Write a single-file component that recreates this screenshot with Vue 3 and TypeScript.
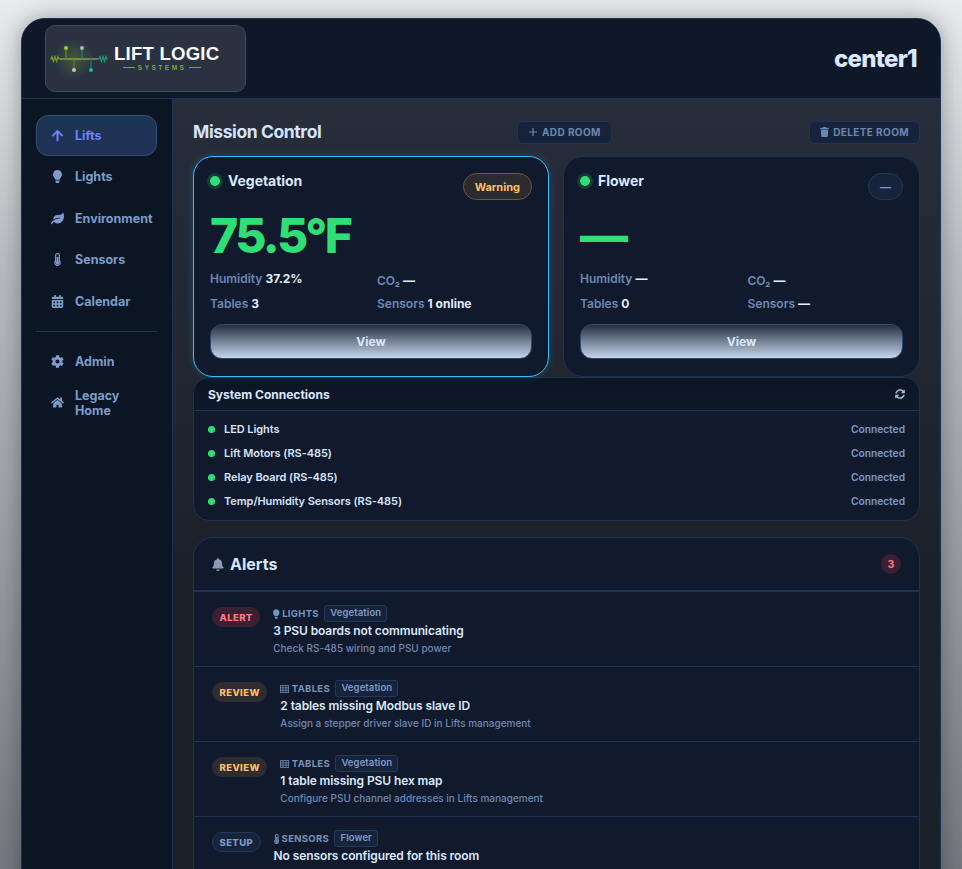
<script setup lang="ts">
interface NavItem {
  label: string
  icon: string
  box: string
  active?: boolean
}

interface Room {
  name: string
  temp: string
  statusLabel: string
  statusClass: string
  selected: boolean
  humidity: string
  co2: string
  tables: string
  sensors: string
}

interface Alert {
  level: string
  levelClass: string
  icon: string
  box: string
  iconWidth: number
  category: string
  room: string
  title: string
  detail?: string
}

const ICONS: Record<string, { box: string; d: string }> = {
  bulb: { box: '0 0 352 512', d: 'M96.06 454.35c.01 6.29 1.87 12.45 5.36 17.69l17.09 25.69a31.99 31.99 0 0 0 26.64 14.28h61.71a31.99 31.99 0 0 0 26.64-14.28l17.09-25.69a31.989 31.989 0 0 0 5.36-17.69l.04-38.35H96.01l.05 38.35zM0 176c0 44.37 16.45 84.85 43.56 115.78 16.52 18.85 42.36 58.23 52.21 91.45.04.26.07.52.11.78h160.24c.04-.26.07-.51.11-.78 9.85-33.22 35.69-72.6 52.21-91.45C335.55 260.85 352 220.37 352 176 352 78.61 272.91-.3 175.45 0 73.44.31 0 82.97 0 176z' },
  leaf: { box: '0 0 576 512', d: 'M546.2 9.7c-5.6-12.5-21.6-13-28.3-1.2C486.9 62.4 431.4 96 368 96h-80C182 96 96 182 96 288c0 7 .8 13.7 1.5 20.5C161.3 262.8 253.4 224 384 224c8.8 0 16 7.2 16 16s-7.2 16-16 16C132.6 256 26 410.1 2.4 468c-6.6 16.3 1.2 34.9 17.5 41.6 16.4 6.8 35-1.1 41.8-17.3 1.5-3.6 20.9-47.9 71.9-90.6 32.4 43.9 94 85.8 174.9 77.2C465.5 467.5 576 326.7 576 154.3c0-50.2-10.8-102.2-29.8-144.6z' },
  calendar: { box: '0 0 448 512', d: 'M0 464c0 26.5 21.5 48 48 48h352c26.5 0 48-21.5 48-48V192H0v272zm320-196c0-6.6 5.4-12 12-12h40c6.6 0 12 5.4 12 12v40c0 6.6-5.4 12-12 12h-40c-6.6 0-12-5.4-12-12v-40zm0 128c0-6.6 5.4-12 12-12h40c6.6 0 12 5.4 12 12v40c0 6.6-5.4 12-12 12h-40c-6.6 0-12-5.4-12-12v-40zM192 268c0-6.6 5.4-12 12-12h40c6.6 0 12 5.4 12 12v40c0 6.6-5.4 12-12 12h-40c-6.6 0-12-5.4-12-12v-40zm0 128c0-6.6 5.4-12 12-12h40c6.6 0 12 5.4 12 12v40c0 6.6-5.4 12-12 12h-40c-6.6 0-12-5.4-12-12v-40zM64 268c0-6.6 5.4-12 12-12h40c6.6 0 12 5.4 12 12v40c0 6.6-5.4 12-12 12H76c-6.6 0-12-5.4-12-12v-40zm0 128c0-6.6 5.4-12 12-12h40c6.6 0 12 5.4 12 12v40c0 6.6-5.4 12-12 12H76c-6.6 0-12-5.4-12-12v-40zM400 64h-48V16c0-8.8-7.2-16-16-16h-32c-8.8 0-16 7.2-16 16v48H160V16c0-8.8-7.2-16-16-16h-32c-8.8 0-16 7.2-16 16v48H48C21.5 64 0 85.5 0 112v48h448v-48c0-26.5-21.5-48-48-48z' },
  cog: { box: '0 0 512 512', d: 'M487.4 315.7l-42.6-24.6c4.3-23.2 4.3-47 0-70.2l42.6-24.6c4.9-2.8 7.1-8.6 5.5-14-11.1-35.6-30-67.8-54.7-94.6-3.8-4.1-10-5.1-14.8-2.3L380.8 110c-17.9-15.4-38.5-27.3-60.8-35.1V25.8c0-5.6-3.9-10.5-9.4-11.7-36.7-8.2-74.3-7.8-109.2 0-5.5 1.2-9.4 6.1-9.4 11.7V75c-22.2 7.9-42.8 19.8-60.8 35.1L88.7 85.5c-4.9-2.8-11-1.9-14.8 2.3-24.7 26.7-43.6 58.9-54.7 94.6-1.7 5.4.6 11.2 5.5 14L67.3 221c-4.3 23.2-4.3 47 0 70.2l-42.6 24.6c-4.9 2.8-7.1 8.6-5.5 14 11.1 35.6 30 67.8 54.7 94.6 3.8 4.1 10 5.1 14.8 2.3l42.6-24.6c17.9 15.4 38.5 27.3 60.8 35.1v49.2c0 5.6 3.9 10.5 9.4 11.7 36.7 8.2 74.3 7.8 109.2 0 5.5-1.2 9.4-6.1 9.4-11.7v-49.2c22.2-7.9 42.8-19.8 60.8-35.1l42.6 24.6c4.9 2.8 11 1.9 14.8-2.3 24.7-26.7 43.6-58.9 54.7-94.6 1.5-5.5-.7-11.3-5.6-14.1zM256 336c-44.1 0-80-35.9-80-80s35.9-80 80-80 80 35.9 80 80-35.9 80-80 80z' },
  home: { box: '0 0 576 512', d: 'M280.37 148.26L96 300.11V464a16 16 0 0 0 16 16l112.06-.29a16 16 0 0 0 15.92-16V368a16 16 0 0 1 16-16h64a16 16 0 0 1 16 16v95.64a16 16 0 0 0 16 16.05L464 480a16 16 0 0 0 16-16V300L295.67 148.26a12.19 12.19 0 0 0-15.3 0zM571.6 251.47L488 182.56V44.05a12 12 0 0 0-12-12h-56a12 12 0 0 0-12 12v72.61L318.47 43a48 48 0 0 0-61 0L4.34 251.47a12 12 0 0 0-1.6 16.9l25.5 31A12 12 0 0 0 45.15 301l235.22-193.74a12.19 12.19 0 0 1 15.3 0L530.9 301a12 12 0 0 0 16.9-1.6l25.5-31a12 12 0 0 0-1.7-16.93z' },
  arrow: { box: '0 0 448 512', d: 'M34.9 289.5l-22.2-22.2c-9.4-9.4-9.4-24.6 0-33.9L207 39c9.4-9.4 24.6-9.4 33.9 0l194.3 194.3c9.4 9.4 9.4 24.6 0 33.9L413 289.4c-9.5 9.5-25 9.3-34.3-.4L264 168.6V456c0 13.3-10.7 24-24 24h-32c-13.3 0-24-10.7-24-24V168.6L69.2 289.1c-9.3 9.8-24.8 10-34.3.4z' },
  thermo: { box: '0 0 256 512', d: 'M192 384c0 35.3-28.7 64-64 64s-64-28.7-64-64c0-23.7 12.9-44.3 32-55.4V176c0-17.7 14.3-32 32-32s32 14.3 32 32v152.6c19.1 11.1 32 31.7 32 55.4zM224 288V96c0-53-43-96-96-96S32 43 32 96v192C12.3 312.7 0 344.9 0 384c0 70.7 57.3 128 128 128s128-57.3 128-128c0-39.1-12.3-71.3-32-96zm-96 176c-44.1 0-80-35.9-80-80 0-25.6 12.2-49 32-64V96c0-26.5 21.500-48 48-48s48 21.500 48 48v224c19.800 15 32 38.400 32 64 0 44.100-35.900 80-80 80z' },
  table: { box: '0 0 512 512', d: 'M0 48H512V464H0ZM40 88h110v85H40ZM190 88h132v85H190ZM362 88h110v85H362ZM40 213h110v85H40ZM190 213h132v85H190ZM362 213h110v85H362ZM40 338h110v86H40ZM190 338h132v86H190ZM362 338h110v86H362Z' }
}

const mainNav: NavItem[] = [
  { label: 'Lifts', icon: ICONS.arrow.d, box: ICONS.arrow.box, active: true },
  { label: 'Lights', icon: ICONS.bulb.d, box: ICONS.bulb.box },
  { label: 'Environment', icon: ICONS.leaf.d, box: ICONS.leaf.box },
  { label: 'Sensors', icon: ICONS.thermo.d, box: ICONS.thermo.box },
  { label: 'Calendar', icon: ICONS.calendar.d, box: ICONS.calendar.box }
]

const bottomNav: NavItem[] = [
  { label: 'Admin', icon: ICONS.cog.d, box: ICONS.cog.box },
  { label: 'Legacy Home', icon: ICONS.home.d, box: ICONS.home.box }
]

const rooms: Room[] = [
  { name: 'Vegetation', temp: '75.5°F', statusLabel: 'Warning', statusClass: 'warn', selected: true, humidity: '37.2%', co2: '—', tables: '3', sensors: '1 online' },
  { name: 'Flower', temp: '—', statusLabel: '—', statusClass: 'none', selected: false, humidity: '—', co2: '—', tables: '0', sensors: '—' }
]

const connections = ['LED Lights', 'Lift Motors (RS-485)', 'Relay Board (RS-485)', 'Temp/Humidity Sensors (RS-485)']

const alerts: Alert[] = [
  { level: 'ALERT', levelClass: 'alert', icon: ICONS.bulb.d, box: ICONS.bulb.box, iconWidth: 6.5, category: 'LIGHTS', room: 'Vegetation', title: '3 PSU boards not communicating', detail: 'Check RS-485 wiring and PSU power' },
  { level: 'REVIEW', levelClass: 'review', icon: ICONS.table.d, box: ICONS.table.box, iconWidth: 9, category: 'TABLES', room: 'Vegetation', title: '2 tables missing Modbus slave ID', detail: 'Assign a stepper driver slave ID in Lifts management' },
  { level: 'REVIEW', levelClass: 'review', icon: ICONS.table.d, box: ICONS.table.box, iconWidth: 9, category: 'TABLES', room: 'Vegetation', title: '1 table missing PSU hex map', detail: 'Configure PSU channel addresses in Lifts management' },
  { level: 'SETUP', levelClass: 'setup', icon: ICONS.thermo.d, box: ICONS.thermo.box, iconWidth: 5.5, category: 'SENSORS', room: 'Flower', title: 'No sensors configured for this room' }
]
</script>

<template>
  <div class="page">
    <div class="window">
      <header class="topbar">
        <div class="logo">
          <svg class="logo-art" viewBox="0 0 60 40" width="60" height="40">
            <defs>
              <radialGradient id="logoGlow">
                <stop offset="0" stop-color="#7fb02a" stop-opacity="0.3" />
                <stop offset="1" stop-color="#7fb02a" stop-opacity="0" />
              </radialGradient>
            </defs>
            <circle cx="25" cy="20" r="20" fill="url(#logoGlow)" />
            <path d="M11 20H49" stroke="#a9c65a" stroke-width="1" />
            <path d="M1 20h1l1-2.500 1.500 5 1.500-5 1.500 5 1.500-5 1 2.500h2" fill="none" stroke="#6fa51f" stroke-width="1.100" />
            <path d="M49 20h1l1-2.500 1.500 5 1.500-5 1.500 5 1.500-5 1 2.500h1" fill="none" stroke="#15a06c" stroke-width="1.100" />
            <path d="M17 9V20" stroke="#5d8a18" stroke-width="1.300" />
            <path d="M33 9V20" stroke="#15855c" stroke-width="1.300" />
            <path d="M25 20V31" stroke="#5d7a2a" stroke-width="1.300" />
            <path d="M42 20V31" stroke="#1a7a58" stroke-width="1.300" />
            <circle cx="17" cy="9" r="2" fill="#9ad21e" />
            <circle cx="33" cy="9" r="2" fill="#b5b5ad" />
            <circle cx="25" cy="31" r="2" fill="#c5c5bf" />
            <circle cx="42" cy="31" r="2" fill="#12c285" />
          </svg>
          <div class="logo-text">
            <div class="logo-name">LIFT LOGIC</div>
            <div class="logo-sub"><i></i><span>SYSTEMS</span><i></i></div>
          </div>
        </div>
        <div class="center-name">center1</div>
      </header>

      <div class="body">
        <aside class="sidebar">
          <nav class="nav">
            <a v-for="item in mainNav" :key="item.label" :class="['nav-item', { active: item.active }]">
              <svg class="nav-icon" :viewBox="item.box"><path :d="item.icon" fill="currentColor" fill-rule="evenodd" /></svg>
              <span>{{ item.label }}</span>
            </a>
          </nav>
          <div class="nav-divider"></div>
          <nav class="nav">
            <a v-for="item in bottomNav" :key="item.label" class="nav-item">
              <svg class="nav-icon" :viewBox="item.box"><path :d="item.icon" fill="currentColor" fill-rule="evenodd" /></svg>
              <span>{{ item.label }}</span>
            </a>
          </nav>
        </aside>

        <main class="main">
          <div class="title-row">
            <h1>Mission Control</h1>
            <button class="ghost-btn add">
              <svg viewBox="0 0 10 10" width="10" height="10"><path d="M5 1V9M1 5H9" stroke="currentColor" stroke-width="1.200" /></svg>
              ADD ROOM
            </button>
            <button class="ghost-btn">
              <svg viewBox="0 0 448 512" width="9" height="10"><path d="M432 32H312l-9.400-18.700A24 24 0 0 0 281.100 0H166.800a23.720 23.720 0 0 0-21.400 13.300L136 32H16A16 16 0 0 0 0 48v32a16 16 0 0 0 16 16h416a16 16 0 0 0 16-16V48a16 16 0 0 0-16-16zM53.200 467a48 48 0 0 0 47.900 45h245.800a48 48 0 0 0 47.900-45L416 128H32z" fill="currentColor" /></svg>
              DELETE ROOM
            </button>
          </div>

          <div class="rooms">
            <section v-for="room in rooms" :key="room.name" :class="['room', { selected: room.selected }]">
              <div class="room-head">
                <div class="room-name"><span class="room-dot"></span>{{ room.name }}</div>
                <span :class="['status', room.statusClass]">{{ room.statusLabel }}</span>
              </div>
              <div class="room-temp">{{ room.temp }}</div>
              <div class="stats">
                <div>Humidity <b>{{ room.humidity }}</b></div>
                <div class="low">CO₂ <b>{{ room.co2 }}</b></div>
                <div>Tables <b>{{ room.tables }}</b></div>
                <div>Sensors <b>{{ room.sensors }}</b></div>
              </div>
              <button class="view-btn">View</button>
            </section>
          </div>

          <section class="connections">
            <div class="conn-head">
              <span>System Connections</span>
              <svg viewBox="0 0 512 512" width="10" height="10"><path d="M370.720 133.280C339.458 104.008 298.888 87.962 255.848 88c-77.458.068-144.328 53.178-162.791 126.850-1.344 5.363-6.122 9.150-11.651 9.150H24.103c-7.498 0-13.194-6.807-11.807-14.176C33.933 94.924 134.813 8 256 8c66.448 0 126.791 26.136 171.315 68.685L463.030 40.970C478.149 25.851 504 36.559 504 57.941V192c0 13.255-10.745 24-24 24H345.941c-21.382 0-32.090-25.851-16.971-40.971l41.750-41.749zM32 296h134.059c21.382 0 32.090 25.851 16.971 40.971l-41.750 41.750c31.262 29.273 71.835 45.319 114.876 45.280 77.418-.07 144.315-53.144 162.787-126.849 1.344-5.363 6.122-9.150 11.651-9.150h57.304c7.498 0 13.194 6.807 11.807 14.176C478.067 417.076 377.187 504 256 504c-66.448 0-126.791-26.136-171.315-68.685L48.970 471.030C33.851 486.149 8 475.441 8 454.059V320c0-13.255 10.745-24 24-24z" fill="currentColor" /></svg>
            </div>
            <div class="conn-list">
              <div v-for="name in connections" :key="name" class="conn-row">
                <span class="conn-dot"></span>
                <span class="conn-name">{{ name }}</span>
                <span class="conn-state">Connected</span>
              </div>
            </div>
          </section>

          <section class="alerts">
            <div class="alerts-head">
              <svg viewBox="0 0 448 512" width="12" height="13"><path d="M224 512c35.320 0 63.970-28.650 63.970-64H160.030c0 35.350 28.650 64 63.970 64zm215.390-149.710c-19.320-20.760-55.470-51.990-55.470-154.290 0-77.700-54.480-139.900-127.940-155.160V32c0-17.670-14.320-32-31.980-32s-31.980 14.330-31.980 32v20.840C118.560 68.100 64.080 130.300 64.080 208c0 102.300-36.150 133.530-55.470 154.290-6 6.450-8.660 14.160-8.610 21.710.11 16.400 12.980 32 32.100 32h383.800c19.120 0 32-15.600 32.100-32 .05-7.550-2.610-15.270-8.610-21.710z" fill="currentColor" /></svg>
              <h2>Alerts</h2>
              <span class="count">3</span>
            </div>
            <div v-for="alert in alerts" :key="alert.title" class="alert-row">
              <span :class="['level', alert.levelClass]">{{ alert.level }}</span>
              <div class="alert-body">
                <div class="alert-meta">
                  <svg :viewBox="alert.box" height="10" :width="alert.iconWidth"><path :d="alert.icon" fill="currentColor" fill-rule="evenodd" /></svg>
                  <span class="alert-cat">{{ alert.category }}</span>
                  <span class="alert-room">{{ alert.room }}</span>
                </div>
                <div class="alert-title">{{ alert.title }}</div>
                <div v-if="alert.detail" class="alert-detail">{{ alert.detail }}</div>
              </div>
            </div>
          </section>
        </main>
      </div>
    </div>
  </div>
</template>

<style>
html,
body {
  margin: 0;
  height: 100%;
  overflow: hidden;
}
</style>

<style scoped>
.page {
  height: 869px;
  overflow: hidden;
  box-sizing: border-box;
  padding: 18px 21px 0;
  background: linear-gradient(180deg, #e9ecef 0%, #b9bcc0 30%, #75787e 100%);
  font-family: Inter, "Liberation Sans", sans-serif;
}

.window {
  box-sizing: border-box;
  min-height: 1000px;
  background: #0d1626;
  border: 1px solid #1e3352;
  border-radius: 24px 24px 0 0;
  overflow: hidden;
  box-shadow: 0 0 22px rgba(10, 16, 28, 0.35);
}

.topbar {
  display: flex;
  justify-content: space-between;
  align-items: center;
  height: 80px;
  box-sizing: border-box;
  padding: 0 23px;
  border-bottom: 1px solid #1e3352;
  background: #0e1829;
}

.logo {
  box-sizing: border-box;
  display: flex;
  align-items: center;
  width: 201px;
  height: 67px;
  padding-left: 3px;
  gap: 5px;
  background: #2a3242;
  border: 1px solid #424b5b;
  border-radius: 10px;
}

.logo-text {
  text-align: center;
  padding-bottom: 2px;
}

.logo-name {
  font-family: "Liberation Sans", Arial, sans-serif;
  font-weight: 700;
  font-size: 18.6px;
  line-height: 20px;
  color: #fff;
  letter-spacing: 0.2px;
}

.logo-sub {
  display: flex;
  align-items: center;
  justify-content: center;
  gap: 3px;
  margin-left: -9px;
  font-family: "Liberation Sans", Arial, sans-serif;
  font-size: 6.5px;
  font-weight: 700;
  letter-spacing: 2.5px;
  line-height: 8px;
  color: #76ab20;
}

.logo-sub i {
  width: 12px;
  height: 1px;
  background: #76ab20;
}

.center-name {
  font-size: 24px;
  font-weight: 800;
  letter-spacing: -0.7px;
  color: #dbe8ff;
}

.body {
  display: flex;
}

.sidebar {
  box-sizing: border-box;
  flex: 0 0 151px;
  width: 151px;
  min-width: 0;
  padding: 15.500px 15px 16px 14px;
  background: #0c1524;
  border-right: 1px solid #1e3352;
}

.nav {
  display: flex;
  flex-direction: column;
}

.nav-item {
  display: flex;
  align-items: center;
  box-sizing: border-box;
  min-height: 41.500px;
  padding: 0 4px 0 13.500px;
  gap: 11.500px;
  font-size: 12.500px;
  line-height: 15px;
  font-weight: 700;
  color: #7d9ccb;
  border: 1px solid transparent;
  border-radius: 12px;
}

.nav-item.active {
  color: #6c83ff;
  background: linear-gradient(180deg, #1b3651 0%, #222f58 100%);
  border-color: #2f4f78;
}

.nav-icon {
  flex: 0 0 13px;
  width: 13px;
  height: 13px;
}

.nav-divider {
  height: 1px;
  margin: 9px 0 8.500px;
  background: #22344f;
}

.main {
  flex: 1;
  min-width: 0;
  padding: 20px;
  background: linear-gradient(180deg, #272d3b 0%, #1c2029 60%);
}

.title-row {
  display: flex;
  align-items: center;
  height: 26px;
  margin-bottom: 11px;
}

.title-row h1 {
  margin: -2px 0 0;
  font-size: 17.5px;
  font-weight: 700;
  letter-spacing: -0.4px;
  color: #d5e3fb;
  width: 324px;
}

.ghost-btn {
  display: flex;
  align-items: center;
  gap: 4px;
  height: 23px;
  padding: 0 10px;
  background: #17233a;
  border: 1px solid #1f3555;
  border-radius: 6px;
  font-family: inherit;
  font-size: 10px;
  font-weight: 700;
  letter-spacing: 0.4px;
  color: #6e86ad;
}

.ghost-btn.add {
  margin-right: auto;
}

.rooms {
  display: grid;
  grid-template-columns: 356fr 357fr;
  gap: 14px;
}

.room {
  box-sizing: border-box;
  height: 221px;
  padding: 16px;
  background: #101a2c;
  border: 1px solid #1e3352;
  border-radius: 20px;
}

.room.selected {
  border-color: #38bdf8;
  box-shadow: 0 0 8px rgba(56, 189, 248, 0.2);
}

.room-head {
  display: flex;
  justify-content: space-between;
  height: 27px;
}

.room-name {
  display: flex;
  align-items: center;
  height: 15px;
  font-size: 14px;
  font-weight: 700;
  letter-spacing: -0.05px;
  color: #dce8fc;
}

.room-dot {
  width: 10px;
  height: 10px;
  margin-right: 8px;
  border-radius: 50%;
  background: #2fdf75;
  box-shadow: 0 0 0 3px rgba(47, 223, 117, 0.16);
}

.status {
  box-sizing: border-box;
  height: 27px;
  padding: 0 11px;
  display: flex;
  align-items: center;
  border-radius: 14px;
  font-size: 11px;
  font-weight: 700;
}

.status.warn {
  color: #ffbe66;
  background: #2b2b2f;
  border: 1px solid #6b5a3e;
}

.status.none {
  color: #7d9ccb;
  background: #17233a;
  border: 1px solid #24395a;
  width: 35px;
  justify-content: center;
  padding: 0;
}

.room-temp {
  height: 57px;
  margin-top: 7px;
  font-size: 48px;
  line-height: 57px;
  font-weight: 800;
  letter-spacing: -2.600px;
  color: #2fdf75;
}

.stats {
  display: grid;
  grid-template-columns: 1fr 1fr;
  column-gap: 12px;
  row-gap: 9px;
  margin-top: 7px;
  font-size: 12px;
  line-height: 16px;
  font-weight: 600;
  color: #6f88b4;
}

.stats b {
  font-weight: 700;
  color: #e4edfc;
}

.stats .low {
  position: relative;
  top: 2px;
}

.view-btn {
  display: block;
  width: 100%;
  height: 35px;
  margin-top: 12px;
  background: linear-gradient(180deg, #262e41 0%, #c6d6ec 100%);
  border: 1px solid #2e4a72;
  border-radius: 12px;
  font-family: inherit;
  font-size: 12px;
  font-weight: 700;
  color: #dce8fb;
}

.connections {
  background: #101a2c;
  border: 1px solid #1e3352;
  border-radius: 16px;
  overflow: hidden;
}

.conn-head {
  display: flex;
  justify-content: space-between;
  align-items: center;
  height: 32px;
  padding: 0 14px;
  background: linear-gradient(180deg, #0c1524 0%, #0f192b 100%);
  border-bottom: 1px solid #1e3352;
  font-size: 12px;
  font-weight: 700;
  color: #dbe7fb;
}

.conn-head svg {
  color: #a8bcd8;
}

.conn-list {
  padding: 6px 14px 7px;
}

.conn-row {
  display: flex;
  align-items: center;
  height: 24px;
}

.conn-dot {
  width: 7px;
  height: 7px;
  margin-right: 9px;
  border-radius: 50%;
  background: #2fdf75;
}

.conn-name {
  font-size: 11px;
  font-weight: 600;
  letter-spacing: -0.07px;
  color: #d6e3f8;
}

.conn-state {
  margin-left: auto;
  font-size: 10.200px;
  font-weight: 600;
  color: #7c9ac8;
}

.alerts {
  margin-top: 16px;
  background: #101a2c;
  border: 1px solid #1e3352;
  border-radius: 20px;
  overflow: hidden;
}

.alerts-head {
  display: flex;
  align-items: center;
  gap: 6px;
  height: 52px;
  padding: 0 18px;
  border-bottom: 2px solid #1e3352;
  color: #8d9cb4;
}

.alerts-head h2 {
  margin: 0;
  font-size: 16px;
  font-weight: 700;
  color: #d8e5fb;
}

.count {
  margin-left: auto;
  width: 20px;
  height: 20px;
  display: flex;
  align-items: center;
  justify-content: center;
  border-radius: 50%;
  background: #3a2030;
  font-size: 10.500px;
  font-weight: 700;
  color: #ff7a85;
}

.alert-row {
  display: flex;
  align-items: flex-start;
  gap: 13px;
  box-sizing: border-box;
  height: 75px;
  padding: 15px 18px 0;
  border-bottom: 1px solid #1e3352;
}

.level {
  box-sizing: border-box;
  display: flex;
  align-items: center;
  height: 20px;
  padding: 0 7.500px;
  border-radius: 10px;
  font-size: 9.500px;
  font-weight: 800;
  letter-spacing: 0.4px;
}

.level.alert {
  color: #ff7a85;
  background: #3a2030;
}

.level.review {
  color: #ffbe66;
  background: #2e2c2f;
}

.level.setup {
  color: #7d9ccb;
  background: #17233a;
  border: 1px solid #24395a;
  padding: 0 6.500px;
}

.alert-meta {
  display: flex;
  align-items: center;
  gap: 2.500px;
  height: 17px;
  margin-top: -2px;
  color: #7a93bb;
}

.alert-cat {
  font-size: 9.500px;
  font-weight: 700;
  letter-spacing: 0.3px;
  margin-right: 3px;
}

.alert-room {
  box-sizing: border-box;
  height: 17px;
  line-height: 14px;
  padding: 0 5px;
  font-size: 9.500px;
  font-weight: 600;
  letter-spacing: 0.1px;
  color: #7d9ccb;
  background: #17233a;
  border: 1px solid #24395a;
  border-radius: 3px;
}

.alert-title {
  font-size: 12px;
  line-height: 17px;
  font-weight: 600;
  letter-spacing: -0.1px;
  color: #dbe7fb;
}

.alert-detail {
  margin-top: 1px;
  font-size: 10px;
  line-height: 16px;
  font-weight: 500;
  color: #6f88b4;
}
</style>
